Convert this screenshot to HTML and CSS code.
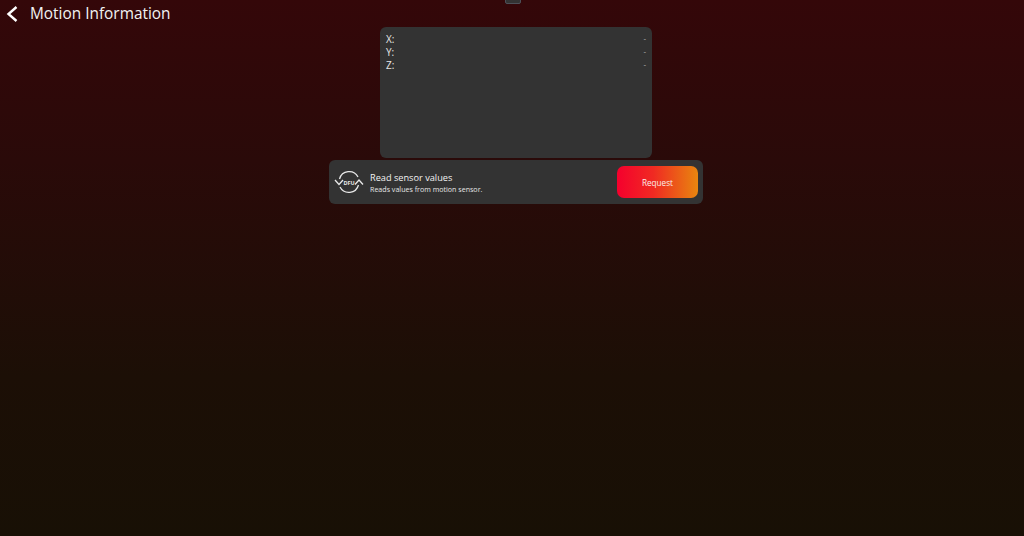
FILE: index.html
```html
<!DOCTYPE html>
<html lang="en">
<head>
    <meta charset="UTF-8">
    <meta name="viewport" content="width=device-width, initial-scale=1.0">
    <title>Motion Information</title>
    <link rel="stylesheet" href="styles.css">
</head>
<body>
    <div class="top-tab"></div>

    <div class="header">
        <svg class="back-icon" width="12" height="16" viewBox="0 0 12 16">
            <path d="M10.5 1 L2.5 8 L10.5 15" fill="none" stroke="#fff" stroke-width="2.4"/>
        </svg>
        <h1>Motion Information</h1>
    </div>

    <div class="content">
        <div class="values-panel">
            <div class="value-row"><span>X:</span><span class="dash">-</span></div>
            <div class="value-row"><span>Y:</span><span class="dash">-</span></div>
            <div class="value-row"><span>Z:</span><span class="dash">-</span></div>
        </div>

        <div class="action-card">
            <svg class="dfu-icon" width="30" height="26" viewBox="0 0 30 26">
                <path d="M5.5 10 A10 10 0 0 1 24 8" fill="none" stroke="#e8e8e8" stroke-width="1.3"/>
                <path d="M24.5 16 A10 10 0 0 1 6 18" fill="none" stroke="#e8e8e8" stroke-width="1.3"/>
                <path d="M1 11 L5 15.5 L9 11" fill="none" stroke="#e8e8e8" stroke-width="1.3"/>
                <path d="M21 15.5 L25 11 L29 15.5" fill="none" stroke="#e8e8e8" stroke-width="1.3"/>
                <text x="15" y="15.5" text-anchor="middle" class="dfu-text">DFU</text>
            </svg>
            <div class="action-text">
                <div class="action-title">Read sensor values</div>
                <div class="action-desc">Reads values from motion sensor.</div>
            </div>
            <button class="request-btn">Request</button>
        </div>
    </div>
</body>
</html>
```

FILE: styles.css
```css
* {
    box-sizing: border-box;
    margin: 0;
    padding: 0;
    font-family: 'Open Sans', 'Noto Sans', sans-serif;
}

html, body {
    height: 100%;
}

body {
    background: linear-gradient(180deg, #340709 0%, #2a0a09 30%, #1c0f06 70%, #181005 100%);
    color: white;
    overflow: hidden;
}

.top-tab {
    position: absolute;
    top: -8px;
    left: 505px;
    width: 16px;
    height: 12px;
    background-color: #333;
    border: 1px solid #4c5058;
    border-radius: 2px;
}

.header {
    display: flex;
    align-items: center;
    height: 27px;
    padding-left: 6px;
}

.back-icon {
    margin-right: 12px;
}

h1 {
    font-size: 15.4px;
    font-weight: 400;
    color: #f2f2f2;
}

.content {
    display: flex;
    flex-direction: column;
    align-items: center;
    gap: 2px;
    padding-left: 8px;
}

.values-panel {
    width: 272px;
    height: 131px;
    padding: 6px;
    background-color: #333;
    border-radius: 6px;
}

.value-row {
    display: flex;
    justify-content: space-between;
    height: 13px;
    font-size: 10px;
    line-height: 13px;
    color: #e6e6e6;
}

.dash {
    font-size: 8px;
    line-height: 10px;
    color: #bbb;
}

.action-card {
    display: flex;
    align-items: center;
    width: 374px;
    height: 44px;
    padding: 0 5px;
    background-color: #333;
    border-radius: 6px;
}

.dfu-icon {
    margin-right: 6px;
    flex-shrink: 0;
}

.dfu-text {
    font-size: 5.5px;
    font-weight: 700;
    fill: #e8e8e8;
}

.action-text {
    flex: 1;
}

.action-title {
    font-size: 9.2px;
    line-height: 13px;
    color: #f2f2f2;
}

.action-desc {
    font-size: 7.1px;
    line-height: 10px;
    color: #e6e6e6;
}

.request-btn {
    width: 81px;
    height: 32px;
    border: none;
    border-radius: 7px;
    background: linear-gradient(90deg, #f5002d 0%, #f02a22 45%, #e8860f 100%);
    color: #fbeeea;
    font-size: 8.2px;
}
```
